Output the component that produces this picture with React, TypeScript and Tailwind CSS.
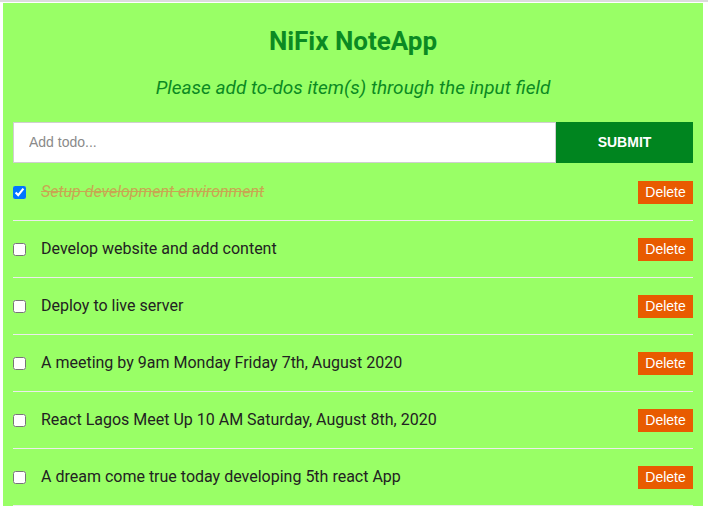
import React, { useState } from "react";

type Todo = { id: number; title: string; completed: boolean };

const INITIAL_TODOS: Todo[] = [
  { id: 1, title: "Setup development environment", completed: true },
  { id: 2, title: "Develop website and add content", completed: false },
  { id: 3, title: "Deploy to live server", completed: false },
  { id: 4, title: "A meeting by 9am Monday Friday 7th, August 2020", completed: false },
  { id: 5, title: "React Lagos Meet Up 10 AM Saturday, August 8th, 2020", completed: false },
  { id: 6, title: "A dream come true today developing 5th react App", completed: false },
];

const App = () => {
  const [todos, setTodos] = useState<Todo[]>(INITIAL_TODOS);
  const [text, setText] = useState("");

  const toggle = (id: number) =>
    setTodos(todos.map((t) => (t.id === id ? { ...t, completed: !t.completed } : t)));

  const remove = (id: number) => setTodos(todos.filter((t) => t.id !== id));

  const submit = (e: React.FormEvent) => {
    e.preventDefault();
    if (!text.trim()) return;
    setTodos([...todos, { id: Date.now(), title: text, completed: false }]);
    setText("");
  };

  return (
    <div className="min-h-[516px] bg-white font-['Roboto',sans-serif]">
      <div className="h-[2px] bg-[#dcdcdc]" />
      <div className="mx-[3px] mt-[1px] w-[700px] bg-[#99ff66] px-[10px]">
        <header className="text-center">
          <h1 className="pt-[23px] text-[26px] font-bold leading-[30px] text-[#0b8a22]">
            NiFix NoteApp
          </h1>
          <p className="mt-[20px] text-[19px] italic leading-[24px] text-[#0b8a22]">
            Please add to-dos item(s) through the input field
          </p>
        </header>

        <form onSubmit={submit} className="mt-[22px] flex h-[41px]">
          <input
            type="text"
            value={text}
            onChange={(e) => setText(e.target.value)}
            placeholder="Add todo..."
            className="flex-1 border border-[#cfcfcf] bg-white px-[15px] font-['Liberation_Sans',sans-serif] text-[14px] text-[#333] outline-none placeholder:text-[#8a8a8a]"
          />
          <button
            type="submit"
            className="w-[137px] bg-[#00851f] font-['Liberation_Sans',sans-serif] text-[14px] font-bold text-white"
          >
            SUBMIT
          </button>
        </form>

        <ul className="pt-[1px]">
          {todos.map((todo) => (
            <li
              key={todo.id}
              className="flex h-[57px] items-center border-b border-[#ececec]"
            >
              <input
                type="checkbox"
                checked={todo.completed}
                onChange={() => toggle(todo.id)}
                className="m-0 h-[13px] w-[13px]"
              />
              <span
                className={
                  todo.completed
                    ? "ml-[15px] flex-1 text-[16px] italic text-[#c8a752] line-through"
                    : "ml-[15px] flex-1 text-[16px] text-[#222]"
                }
              >
                {todo.title}
              </span>
              <button
                onClick={() => remove(todo.id)}
                className="h-[23px] w-[55px] bg-[#e85b00] font-['Liberation_Sans',sans-serif] text-[14px] text-white"
              >
                Delete
              </button>
            </li>
          ))}
        </ul>
      </div>
    </div>
  );
};

export default App;
